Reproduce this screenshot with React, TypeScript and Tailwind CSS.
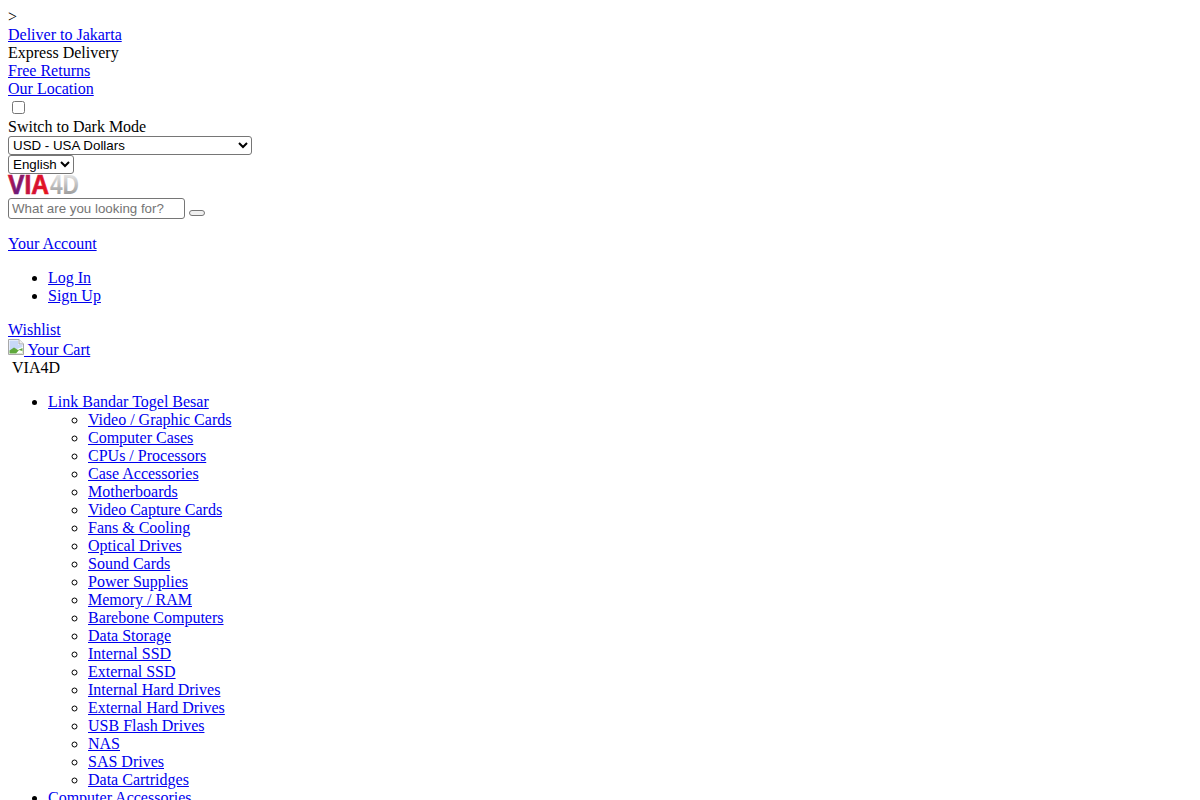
const subLinks = [
  'Video / Graphic Cards',
  'Computer Cases',
  'CPUs / Processors',
  'Case Accessories',
  'Motherboards',
  'Video Capture Cards',
  'Fans & Cooling',
  'Optical Drives',
  'Sound Cards',
  'Power Supplies',
  'Memory / RAM',
  'Barebone Computers',
  'Data Storage',
  'Internal SSD',
  'External SSD',
  'Internal Hard Drives',
  'External Hard Drives',
  'USB Flash Drives',
  'NAS',
  'SAS Drives',
  'Data Cartridges',
]

const A = ({ children }: { children: React.ReactNode }) => (
  <a href="#" className="text-[#0000ee] underline">
    {children}
  </a>
)

const Logo = () => (
  <svg width="72" height="22" viewBox="0 0 72 22" className="block overflow-visible">
    <defs>
      <linearGradient id="via" gradientUnits="userSpaceOnUse" x1="0" y1="0" x2="42" y2="6">
        <stop offset="0" stopColor="#e01030" />
        <stop offset="0.25" stopColor="#6a1a7c" />
        <stop offset="0.55" stopColor="#d0103a" />
        <stop offset="1" stopColor="#e8141c" />
      </linearGradient>
      <linearGradient id="four" gradientUnits="userSpaceOnUse" x1="0" y1="0" x2="0" y2="21">
        <stop offset="0" stopColor="#e8e8e8" />
        <stop offset="1" stopColor="#9a9a9a" />
      </linearGradient>
    </defs>
    <text x="0" y="20" fontFamily="Liberation Sans" fontWeight="700" fontSize="27" textLength="41" lengthAdjust="spacingAndGlyphs" fill="url(#via)" stroke="url(#via)" strokeWidth="0.7">VIA</text>
    <text x="42" y="20" fontFamily="Liberation Sans" fontWeight="700" fontSize="27" textLength="29" lengthAdjust="spacingAndGlyphs" fill="url(#four)">4D</text>
  </svg>
)

const BrokenImage = () => (
  <svg width="16" height="16" viewBox="0 0 16 16" className="inline-block align-baseline">
    <path d="M0.5 0.5H11L15.5 5V15.5H0.5Z" fill="#fff" stroke="#a8a8a8" />
    <path d="M11 0.5V5H15.5" fill="#f0f0f0" stroke="#a8a8a8" />
    <path d="M1.5 1.5H10V5.5H14.5V8L9 10L1.5 12Z" fill="#c8d8f8" />
    <path d="M1.5 14.5V11.5L6 8.5L10 11L14.5 9V14.5Z" fill="#5fa83c" />
    <path d="M8 14.5L11 11L14.5 12V14.5Z" fill="#fff" />
  </svg>
)

export default function App() {
  return (
    <div className="m-2 font-['Liberation_Serif',serif] text-base leading-[18px] text-black bg-white">
      <div>&gt;</div>
      <div><A>Deliver to Jakarta</A></div>
      <div>Express Delivery</div>
      <div><A>Free Returns</A></div>
      <div><A>Our Location</A></div>
      <div className="h-[20px]">
        <input type="checkbox" className="ml-1 mr-[3px] mt-[3px] mb-[3px] inline-block w-[13px] h-[13px] align-top" />
      </div>
      <div>Switch to Dark Mode</div>
      <select className="block w-[244px] h-[19px] bg-white border border-[#767676] rounded-[3px] font-['Liberation_Sans',sans-serif] text-[13.33px] leading-none text-black">
        <option>USD - USA Dollars</option>
      </select>
      <select className="block w-[66px] h-[19px] bg-white border border-[#767676] rounded-[3px] font-['Liberation_Sans',sans-serif] text-[13.33px] leading-none text-black">
        <option>English</option>
      </select>
      <Logo />
      <div className="flex items-end mt-[2px] gap-1">
        <input
          placeholder="What are you looking for?"
          className="w-[177px] h-[21px] px-[3px] bg-white border border-[#767676] rounded-[3px] font-['Liberation_Sans',sans-serif] text-[13.33px] placeholder:text-[#757575]"
        />
        <button className="w-4 h-[6px] mb-[3px] bg-[#efefef] border border-[#767676] rounded-[3px]" />
      </div>
      <div className="mt-4"><A>Your Account</A></div>
      <ul className="mt-4 pl-10 list-disc">
        <li><A>Log In</A></li>
        <li><A>Sign Up</A></li>
      </ul>
      <div className="mt-4"><A>Wishlist</A></div>
      <div className="h-5 leading-[normal]">
        <A><BrokenImage /> Your Cart</A>
      </div>
      <div className="pl-1">VIA4D</div>
      <ul className="mt-4 pl-10 list-disc">
        <li>
          <A>Link Bandar Togel Besar</A>
          <ul className="pl-10 list-[circle]">
            {subLinks.map((name) => (
              <li key={name}><A>{name}</A></li>
            ))}
          </ul>
        </li>
        <li><A>Computer Accessories</A></li>
      </ul>
    </div>
  )
}
